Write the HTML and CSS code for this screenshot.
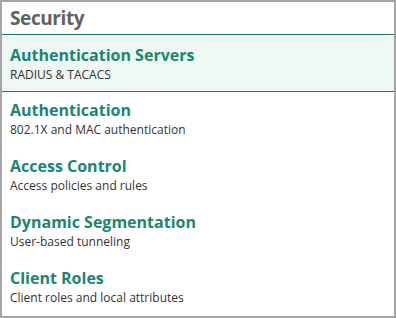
FILE: index.html
```html
<!DOCTYPE html>
<html lang="en">
<head>
    <meta charset="UTF-8">
    <meta name="viewport" content="width=device-width, initial-scale=1.0">
    <title>Security</title>
    <link rel="stylesheet" href="styles.css">
</head>
<body>

    <div class="panel">
        <div class="panel-header">Security</div>
        <ul class="menu">
            <li class="menu-item selected">
                <div class="item-title">Authentication Servers</div>
                <div class="item-desc">RADIUS &amp; TACACS</div>
            </li>
            <li class="menu-item">
                <div class="item-title">Authentication</div>
                <div class="item-desc">802.1X and MAC authentication</div>
            </li>
            <li class="menu-item">
                <div class="item-title">Access Control</div>
                <div class="item-desc">Access policies and rules</div>
            </li>
            <li class="menu-item">
                <div class="item-title">Dynamic Segmentation</div>
                <div class="item-desc">User-based tunneling</div>
            </li>
            <li class="menu-item">
                <div class="item-title">Client Roles</div>
                <div class="item-desc">Client roles and local attributes</div>
            </li>
        </ul>
    </div>

</body>
</html>
```

FILE: styles.css
```css
body {
    margin: 0;
    font-family: 'Open Sans', Lato, sans-serif;
    background: white;
}
.panel {
    width: 396px;
    height: 318px;
    box-sizing: border-box;
    border: 2px solid #a5a5a5;
    background: white;
}
.panel-header {
    padding: 4px 8px;
    font-size: 19px;
    line-height: 24px;
    font-weight: bold;
    letter-spacing: -0.4px;
    color: #626262;
    border-bottom: 1px solid #1e7b6b;
}
.menu {
    list-style: none;
    margin: 0;
    padding: 0;
}
.menu-item {
    padding: 8px 8px 10px;
    cursor: pointer;
}
.menu-item.selected {
    padding: 10px 8px 8px;
    background: #eef7f4;
    border-bottom: 1px solid #1e7b6b;
}
.item-title {
    font-size: 16px;
    line-height: 20px;
    font-weight: bold;
    color: #1a8671;
    margin-bottom: 2px;
}
.item-desc {
    font-size: 12px;
    line-height: 16px;
    color: #333333;
}
```
